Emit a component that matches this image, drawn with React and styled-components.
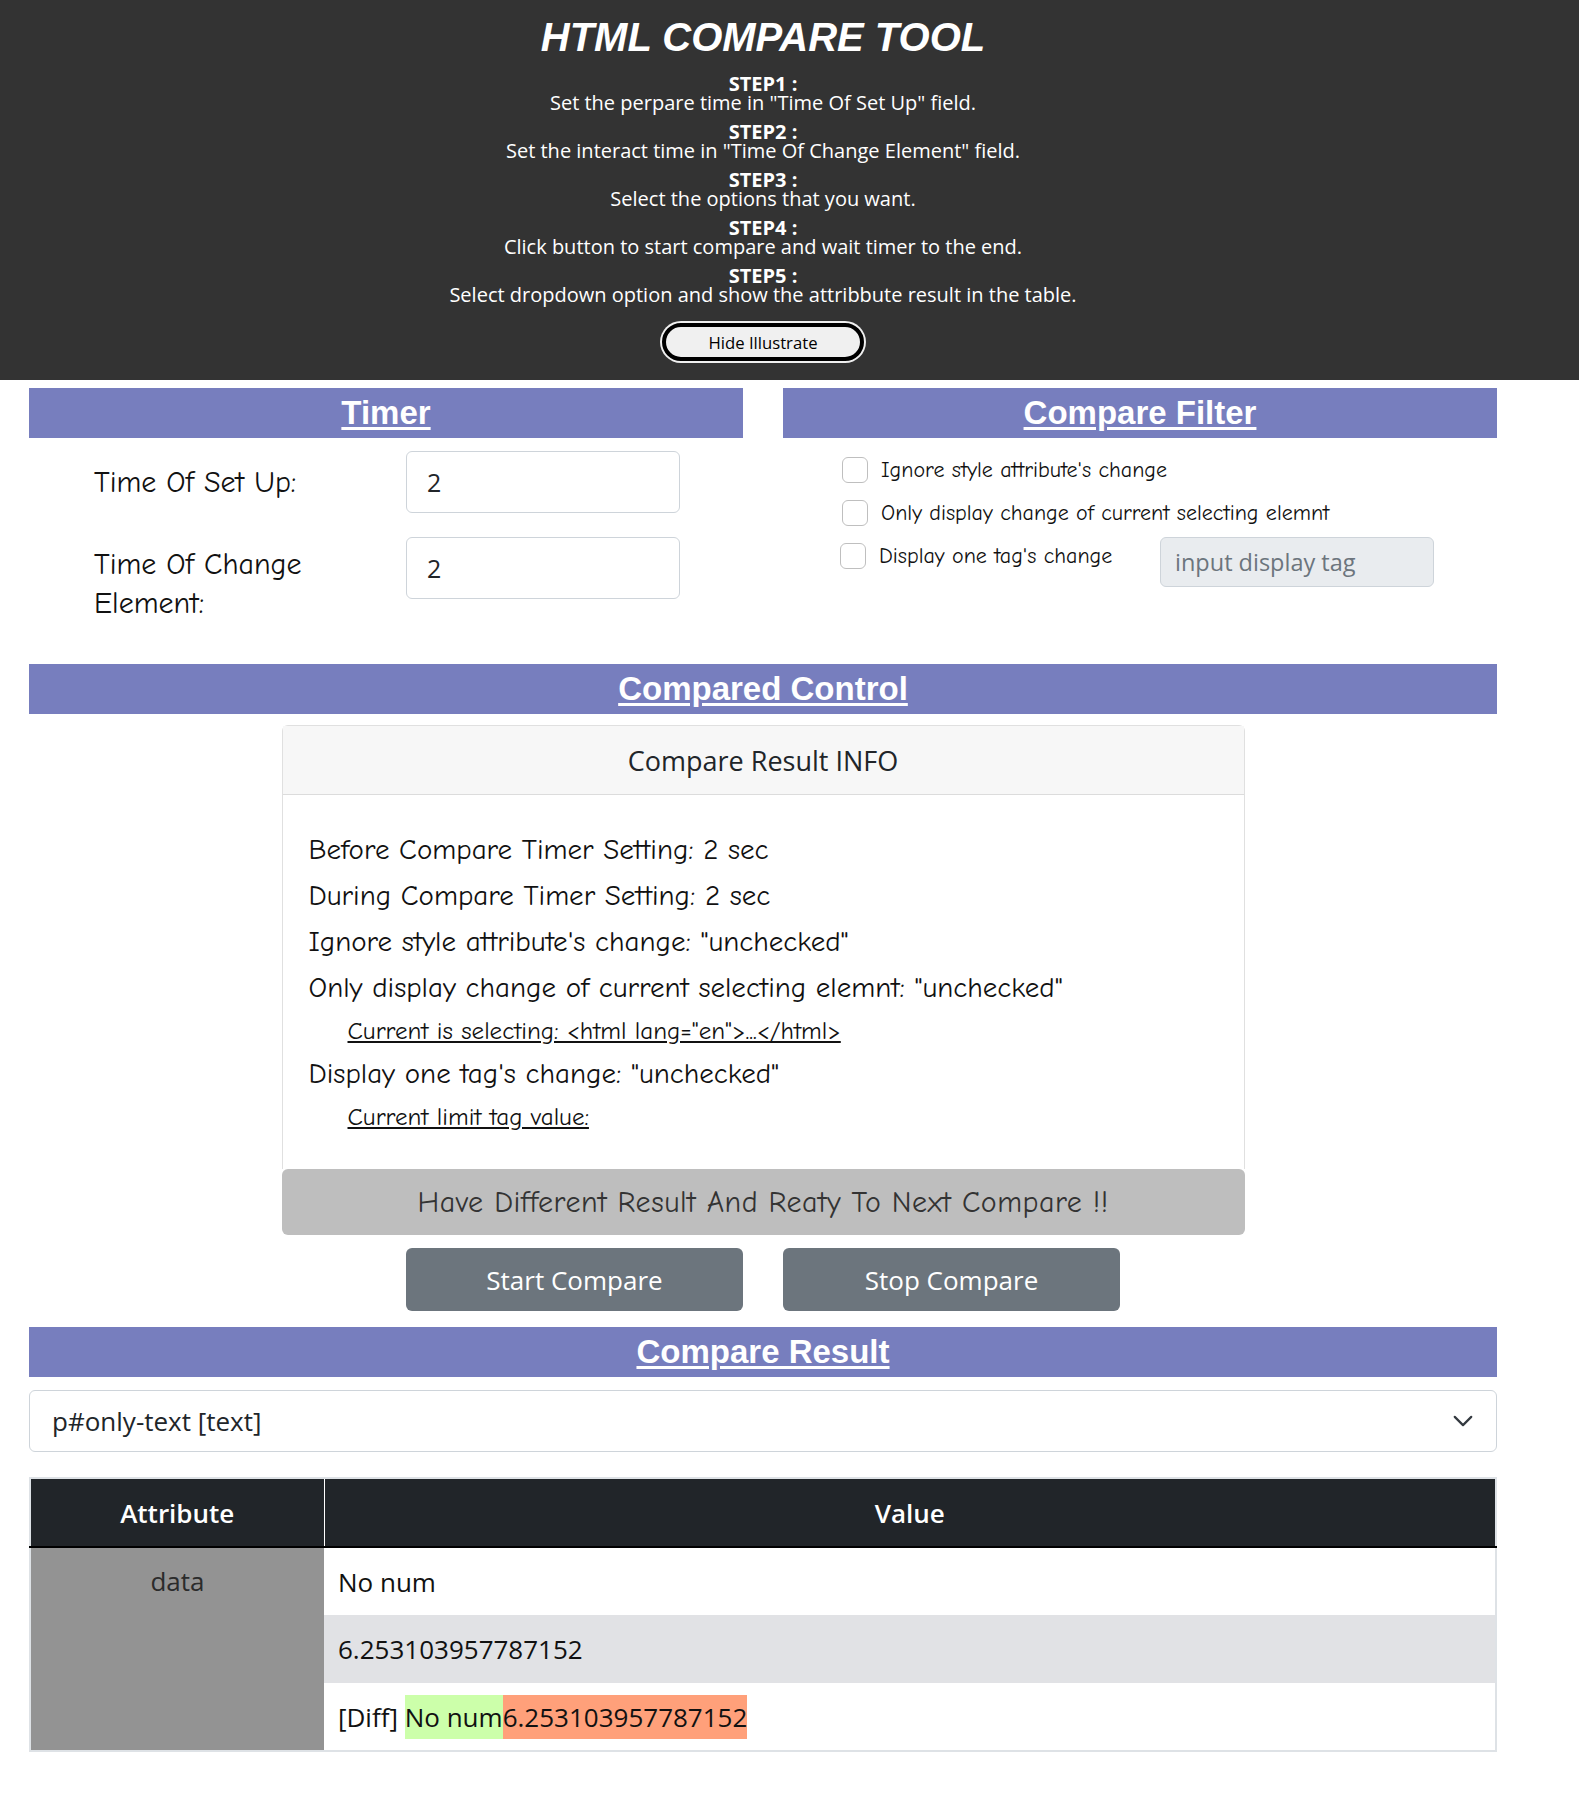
import React from "react";
import styled, { createGlobalStyle } from "styled-components";

const GlobalStyle = createGlobalStyle`
  body {
    margin: 0;
    background: #fff;
    font-family: "Segoe UI", "Open Sans", sans-serif;
    color: #212529;
  }
  * { box-sizing: border-box; }
`;

const comic = `"Comic Sans MS", "Comic Neue", "Lato", sans-serif`;

const Intro = styled.header`
  background: #333333;
  color: #fff;
  padding: 14px 53px 19px 0;
  display: flex;
  flex-direction: column;
  align-items: center;
  text-align: center;
`;

const Title = styled.h1`
  margin: 0;
  font-family: "Liberation Sans", Arial, sans-serif;
  font-style: italic;
  font-weight: 700;
  font-size: 40px;
  line-height: 46px;
`;

const Steps = styled.div`
  margin-top: 15px;
  display: flex;
  flex-direction: column;
  gap: 10px;
`;

const Step = styled.div`
  display: flex;
  flex-direction: column;
`;

const StepLabel = styled.div`
  font-weight: 700;
  font-size: 20px;
  line-height: 18px;
`;

const StepText = styled.div`
  font-size: 20px;
  line-height: 20px;
`;

const ToggleButton = styled.button`
  margin-top: 18px;
  width: 202px;
  height: 38px;
  border: 4px solid #000;
  border-radius: 20px;
  box-shadow: 0 0 0 2px #f0f0f0;
  background: #f0f0f0;
  color: #000;
  font-family: inherit;
  font-size: 16.7px;
`;

const Main = styled.main`
  margin: 8px 0 60px 29px;
  width: 1468px;
  display: flex;
  flex-direction: column;
`;

const TopGrid = styled.div`
  display: grid;
  grid-template-columns: 714px 714px;
  column-gap: 40px;
`;

const Bar = styled.div`
  height: 50px;
  background: #777ebe;
  display: flex;
  align-items: center;
  justify-content: center;
  margin-top: ${(p) => p.$top || 0}px;
`;

const BarTitle = styled.h2`
  margin: 0;
  font-family: "Liberation Sans", Arial, sans-serif;
  font-weight: 700;
  font-size: 33px;
  color: #fff;
  text-decoration: underline;
  text-underline-offset: 3px;
`;

const TimerGrid = styled.div`
  display: grid;
  grid-template-columns: 312px 274px;
  row-gap: 24px;
  padding: 13px 0 0 65px;
`;

const FieldLabel = styled.label`
  font-family: ${comic};
  font-size: 30px;
  line-height: 39px;
  color: #111;
  width: 240px;
  align-self: ${(p) => (p.$top ? "start" : "center")};
  padding-top: ${(p) => (p.$top ? 8 : 0)}px;
`;

const TextInput = styled.input`
  width: 274px;
  height: 62px;
  border: 1px solid #ced4da;
  border-radius: 6px;
  padding: 0 20px;
  font-family: inherit;
  font-size: 25px;
  color: #212529;
  background: ${(p) => (p.disabled ? "#e9ecef" : "#fff")};
  &::placeholder { color: #6c757d; }
`;

const FilterList = styled.div`
  display: flex;
  flex-direction: column;
  gap: 17px;
  padding: 19px 0 0 59px;
`;

const CheckRow = styled.div`
  display: flex;
  align-items: ${(p) => (p.$withInput ? "flex-start" : "center")};
  gap: 13px;
  margin-left: ${(p) => (p.$withInput ? -2 : 0)}px;
  margin-top: ${(p) => (p.$withInput ? -6 : 0)}px;
  & > input[type="checkbox"],
  & > span {
    margin-top: ${(p) => (p.$withInput ? 6 : 0)}px;
  }
`;

const Check = styled.input.attrs({ type: "checkbox" })`
  appearance: none;
  margin: 0;
  width: 26px;
  height: 26px;
  border: 1px solid #bfbfbf;
  border-radius: 6px;
  background: #fff;
  flex: none;
`;

const CheckLabel = styled.span`
  font-family: ${comic};
  font-size: 22px;
  line-height: 26px;
  color: #111;
  width: ${(p) => p.$width || "auto"};
`;

const TagInput = styled(TextInput)`
  height: 50px;
  padding: 0 14px;
  font-size: 23.5px;
`;

const Card = styled.section`
  margin: 11px auto 0;
  width: 963px;
  border: 1px solid #e0e0e0;
  border-radius: 6px 6px 0 0;
  border-bottom: none;
`;

const CardHeader = styled.div`
  height: 69px;
  background: #f7f7f7;
  border-bottom: 1px solid #dcdcdc;
  display: flex;
  align-items: center;
  justify-content: center;
  font-size: 27px;
  color: #212529;
`;

const CardBody = styled.div`
  padding: 32px 26px 32px;
  display: flex;
  flex-direction: column;
`;

const InfoLine = styled.div`
  font-family: ${comic};
  font-size: 29px;
  line-height: 46px;
  color: #111;
`;

const SubLine = styled.div`
  font-family: ${comic};
  font-size: 25px;
  line-height: 40px;
  color: #111;
  padding-left: 39px;
  text-decoration: underline;
`;

const Status = styled.div`
  width: 963px;
  margin: 0 auto;
  height: 66px;
  background: #bebebe;
  border-radius: 6px;
  display: flex;
  align-items: center;
  justify-content: center;
  font-family: ${comic};
  font-size: 30px;
  color: #333;
  letter-spacing: 0.5px;
`;

const ButtonRow = styled.div`
  margin-top: 13px;
  display: flex;
  justify-content: center;
  gap: 40px;
`;

const GrayButton = styled.button`
  width: 337px;
  height: 63px;
  border: none;
  border-radius: 6px;
  background: #6c757d;
  color: #fff;
  font-family: inherit;
  font-size: 26px;
`;

const SelectBox = styled.div`
  margin-top: 13px;
  height: 62px;
  border: 1px solid #ced4da;
  border-radius: 6px;
  display: flex;
  align-items: center;
  justify-content: space-between;
  padding: 0 22px 0 22px;
  font-size: 26px;
  color: #212529;
`;

const Table = styled.table`
  margin-top: 25px;
  width: 100%;
  border-collapse: collapse;
  border: 2px solid #dee2e6;
  font-size: 26px;
`;

const HeadCell = styled.th`
  height: 69px;
  background: #212529;
  color: #fff;
  font-weight: 600;
  font-size: 26px;
  width: ${(p) => p.$width || "auto"};
  border-right: ${(p) => (p.$sep ? "1px solid #fff" : "none")};
  border-bottom: 2px solid #000;
`;

const AttrCell = styled.td`
  background: #939393;
  color: #2b2b2b;
  text-align: center;
  vertical-align: top;
  padding-top: 13px;
  line-height: 40px;
`;

const ValueCell = styled.td`
  height: 68px;
  padding: 0 14px;
  background: ${(p) => (p.$striped ? "#e1e2e5" : "#fff")};
  color: #111;
`;

const Mark = styled.span`
  background: ${(p) => p.$color};
  padding: 4px 0;
`;

const steps = [
  ["STEP1 :", 'Set the perpare time in "Time Of Set Up" field.'],
  ["STEP2 :", 'Set the interact time in "Time Of Change Element" field.'],
  ["STEP3 :", "Select the options that you want."],
  ["STEP4 :", "Click button to start compare and wait timer to the end."],
  ["STEP5 :", "Select dropdown option and show the attribbute result in the table."],
];

export default function App() {
  return (
    <>
      <GlobalStyle />
      <Intro>
        <Title>HTML COMPARE TOOL</Title>
        <Steps>
          {steps.map(([label, text]) => (
            <Step key={label}>
              <StepLabel>{label}</StepLabel>
              <StepText>{text}</StepText>
            </Step>
          ))}
        </Steps>
        <ToggleButton>Hide Illustrate</ToggleButton>
      </Intro>

      <Main>
        <TopGrid>
          <div>
            <Bar>
              <BarTitle>Timer</BarTitle>
            </Bar>
            <TimerGrid>
              <FieldLabel>Time Of Set Up:</FieldLabel>
              <TextInput defaultValue="2" />
              <FieldLabel $top>Time Of Change Element:</FieldLabel>
              <TextInput defaultValue="2" />
            </TimerGrid>
          </div>
          <div>
            <Bar>
              <BarTitle>Compare Filter</BarTitle>
            </Bar>
            <FilterList>
              <CheckRow>
                <Check />
                <CheckLabel>Ignore style attribute's change</CheckLabel>
              </CheckRow>
              <CheckRow>
                <Check />
                <CheckLabel>Only display change of current selecting elemnt</CheckLabel>
              </CheckRow>
              <CheckRow $withInput>
                <Check />
                <CheckLabel $width="268px">Display one tag's change</CheckLabel>
                <TagInput disabled placeholder="input display tag" />
              </CheckRow>
            </FilterList>
          </div>
        </TopGrid>

        <Bar $top={41}>
          <BarTitle>Compared Control</BarTitle>
        </Bar>
        <Card>
          <CardHeader>Compare Result INFO</CardHeader>
          <CardBody>
            <InfoLine>Before Compare Timer Setting: 2 sec</InfoLine>
            <InfoLine>During Compare Timer Setting: 2 sec</InfoLine>
            <InfoLine>Ignore style attribute's change: "unchecked"</InfoLine>
            <InfoLine>Only display change of current selecting elemnt: "unchecked"</InfoLine>
            <SubLine>Current is selecting: &lt;html lang="en"&gt;...&lt;/html&gt;</SubLine>
            <InfoLine>Display one tag's change: "unchecked"</InfoLine>
            <SubLine>Current limit tag value:</SubLine>
          </CardBody>
        </Card>
        <Status>Have Different Result And Reaty To Next Compare !!</Status>
        <ButtonRow>
          <GrayButton>Start Compare</GrayButton>
          <GrayButton>Stop Compare</GrayButton>
        </ButtonRow>

        <Bar $top={16}>
          <BarTitle>Compare Result</BarTitle>
        </Bar>
        <SelectBox>
          <span>p#only-text [text]</span>
          <svg width="22" height="22" viewBox="0 0 16 16">
            <path d="M2 5l6 6 6-6" fill="none" stroke="#343a40" strokeWidth="1.6" strokeLinecap="round" strokeLinejoin="round" />
          </svg>
        </SelectBox>
        <Table>
          <thead>
            <tr>
              <HeadCell $width="294px" $sep>Attribute</HeadCell>
              <HeadCell>Value</HeadCell>
            </tr>
          </thead>
          <tbody>
            <tr>
              <AttrCell rowSpan={3}>data</AttrCell>
              <ValueCell>No num</ValueCell>
            </tr>
            <tr>
              <ValueCell $striped>6.253103957787152</ValueCell>
            </tr>
            <tr>
              <ValueCell>
                [Diff] <Mark $color="#ccffaa">No num</Mark>
                <Mark $color="#ffa07a">6.253103957787152</Mark>
              </ValueCell>
            </tr>
          </tbody>
        </Table>
      </Main>
    </>
  );
}
